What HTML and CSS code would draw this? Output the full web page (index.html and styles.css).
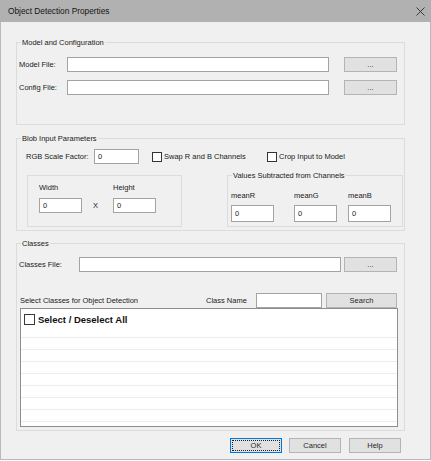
FILE: index.html
```html
<!DOCTYPE html>
<html>
<head>
<meta charset="utf-8">
<title>Object Detection Properties</title>
<link rel="stylesheet" href="styles.css">
</head>
<body>
<div class="window">
  <div class="titlebar">
    <span class="title">Object Detection Properties</span>
    <svg class="close" width="9" height="9" viewBox="0 0 9 9"><path d="M0.5 0.5 L8.5 8.5 M8.5 0.5 L0.5 8.5" stroke="#2b2b2b" stroke-width="0.9" fill="none"/></svg>
  </div>
  <div class="client">
    <div class="group g1">
      <div class="legend">Model and Configuration</div>
      <div class="row g1r1">
        <span class="lbl lbl-model">Model File:</span>
        <span class="input w-file"></span>
        <span class="btn browse">...</span>
      </div>
      <div class="row g1r2">
        <span class="lbl lbl-model">Config File:</span>
        <span class="input w-file"></span>
        <span class="btn browse">...</span>
      </div>
    </div>

    <div class="group g2">
      <div class="legend">Blob Input Parameters</div>
      <div class="row g2r1">
        <span class="lbl lbl-rgb">RGB Scale Factor:</span>
        <span class="input w-rgb"><span class="val">0</span></span>
        <span class="check check-swap"><span class="box"></span><span class="ctext">Swap R and B Channels</span></span>
        <span class="check"><span class="box"></span><span class="ctext">Crop Input to Model</span></span>
      </div>
      <div class="subrow">
        <div class="frame frame-size">
          <div class="col">
            <span class="clbl">Width</span>
            <span class="input w-small"><span class="val">0</span></span>
          </div>
          <span class="times">X</span>
          <div class="col">
            <span class="clbl">Height</span>
            <span class="input w-small"><span class="val">0</span></span>
          </div>
        </div>
        <div class="frame frame-mean">
          <div class="legend legend-sub">Values Subtracted from Channels</div>
          <div class="means">
            <div class="col">
              <span class="clbl">meanR</span>
              <span class="input w-small tall"><span class="val">0</span></span>
            </div>
            <div class="col col-g">
              <span class="clbl">meanG</span>
              <span class="input w-small tall"><span class="val">0</span></span>
            </div>
            <div class="col col-b">
              <span class="clbl">meanB</span>
              <span class="input w-small tall"><span class="val">0</span></span>
            </div>
          </div>
        </div>
      </div>
    </div>

    <div class="group g3">
      <div class="legend">Classes</div>
      <div class="row g3r1">
        <span class="lbl lbl-classes">Classes File:</span>
        <span class="input w-file"></span>
        <span class="btn browse browse-classes">...</span>
      </div>
      <div class="row g3r2">
        <span class="lbl lbl-select">Select Classes for Object Detection</span>
        <span class="lbl lbl-cname">Class Name</span>
        <span class="input w-cname"></span>
        <span class="btn search">Search</span>
      </div>
      <div class="list">
        <div class="item first"><span class="box"></span><span class="itext">Select / Deselect All</span></div>
        <div class="item"></div>
        <div class="item"></div>
        <div class="item"></div>
        <div class="item"></div>
        <div class="item"></div>
        <div class="item"></div>
        <div class="item"></div>
        <div class="item"></div>
      </div>
    </div>

    <div class="buttons">
      <span class="btn dlg ok">OK</span>
      <span class="btn dlg cancel">Cancel</span>
      <span class="btn dlg help">Help</span>
    </div>
  </div>
</div>
</body>
</html>
```

FILE: styles.css
```css
html, body {
  margin: 0;
  padding: 0;
  background: #ffffff;
}
body {
  font-family: "Liberation Sans", Arial, sans-serif;
  font-size: 7.5px;
  color: #1a1a1a;
}
.window {
  width: 431px;
  height: 460px;
  display: flex;
  flex-direction: column;
  background: #f0f0f0;
}
.titlebar {
  height: 22px;
  flex: none;
  background: #b1b1b1;
  display: flex;
  align-items: center;
  justify-content: space-between;
  padding: 0 6px 0 8px;
}
.title {
  font-size: 8.3px;
  color: #141414;
}
.close {
  display: block;
  margin-top: 1px;
}
.client {
  flex: 1;
  border: 1px solid #b9b9b9;
  border-top: 0;
  padding-left: 15px;
}
.group {
  box-sizing: border-box;
  width: 389px;
  border: 1px solid #dcdcdc;
}
.legend {
  display: block;
  width: max-content;
  height: 10px;
  line-height: 10px;
  margin-top: -5px;
  margin-left: 4px;
  padding: 0 1px;
  background: #f0f0f0;
}
.row {
  display: flex;
  align-items: center;
  height: 15px;
}
.lbl {
  flex: none;
  line-height: 10px;
  white-space: nowrap;
}
.input {
  box-sizing: border-box;
  flex: none;
  height: 15px;
  background: #ffffff;
  border: 1px solid #a3a3a3;
  display: flex;
  align-items: center;
}
.val {
  padding-left: 3px;
  line-height: 10px;
}
.btn {
  box-sizing: border-box;
  flex: none;
  height: 15px;
  background: #e1e1e1;
  border: 1px solid #b4b4b4;
  display: flex;
  align-items: center;
  justify-content: center;
  line-height: 10px;
  color: #262626;
}

/* group 1 */
.g1 {
  margin-top: 20px;
  height: 83px;
}
.g1r1 {
  margin-top: 9px;
  padding-left: 2px;
}
.g1r2 {
  margin-top: 8px;
  padding-left: 2px;
}
.lbl-model {
  width: 48px;
}
.w-file {
  width: 262px;
}
.browse {
  width: 53px;
  margin-left: 15px;
}
.browse-classes {
  margin-left: 3px;
}

/* group 2 */
.g2 {
  margin-top: 13px;
  height: 93px;
}
.g2r1 {
  margin-top: 5px;
  padding-left: 9px;
}
.lbl-rgb {
  width: 68px;
}
.w-rgb {
  width: 45px;
}
.check {
  display: flex;
  align-items: center;
  flex: none;
}
.check-swap {
  margin-left: 13px;
  width: 115px;
}
.box {
  box-sizing: border-box;
  flex: none;
  width: 10px;
  height: 10px;
  border: 1px solid #333333;
  background: #ffffff;
}
.ctext {
  margin-left: 2px;
  line-height: 10px;
  white-space: nowrap;
}
.subrow {
  display: flex;
  margin-top: 11px;
}
.frame {
  box-sizing: border-box;
  height: 52px;
  border: 1px solid #dcdcdc;
}
.frame-size {
  width: 155px;
  margin-left: 10px;
  display: flex;
  padding-left: 11px;
}
.col {
  display: flex;
  flex-direction: column;
  flex: none;
}
.clbl {
  height: 10px;
  line-height: 10px;
  white-space: nowrap;
}
.frame-size .clbl {
  margin-top: 7px;
  margin-bottom: 5px;
}
.w-small {
  width: 43px;
}
.times {
  width: 31px;
  box-sizing: border-box;
  padding-left: 11px;
  margin-top: 22px;
  height: 15px;
  line-height: 15px;
  color: #1a1a1a;
}
.frame-mean {
  width: 176px;
  margin-left: 45px;
}
.legend-sub {
  margin-left: 4px;
}
.means {
  display: flex;
  padding-left: 3px;
  margin-top: 10px;
}
.means .clbl {
  margin-bottom: 4px;
}
.tall {
  height: 17px;
}
.col-g {
  margin-left: 20px;
}
.col-b {
  margin-left: 11px;
}

/* group 3 */
.g3 {
  margin-top: 12px;
  height: 188px;
}
.g3r1 {
  margin-top: 8px;
  padding-left: 2px;
}
.lbl-classes {
  width: 60px;
}
.g3r2 {
  margin-top: 21px;
  padding-left: 3px;
}
.lbl-select {
  width: 186px;
}
.lbl-cname {
  width: 50px;
}
.w-cname {
  width: 66px;
}
.search {
  width: 71px;
  margin-left: 4px;
}
.list {
  box-sizing: border-box;
  width: 378px;
  height: 119px;
  margin-left: 3px;
  background: #ffffff;
  border: 1px solid #8e8e8e;
  overflow: hidden;
}
.item {
  height: 11px;
  border-bottom: 1px solid #ececec;
}
.item.first {
  box-sizing: border-box;
  display: flex;
  align-items: flex-start;
  padding-top: 5px;
  padding-left: 3px;
  height: 29px;
}
.item.first .box {
  width: 11px;
  height: 11px;
  border-color: #3a3a3a;
}
.itext {
  margin-left: 3px;
  font-weight: bold;
  font-size: 9.5px;
  line-height: 11px;
  color: #111111;
}

/* dialog buttons */
.buttons {
  width: 389px;
  box-sizing: border-box;
  display: flex;
  justify-content: flex-end;
  padding-right: 4px;
  margin-top: 7px;
}
.dlg {
  width: 52px;
}
.ok {
  border-color: #0078d7;
  outline: 1px dotted #222222;
  outline-offset: -3px;
}
.cancel {
  margin-left: 7px;
}
.help {
  margin-left: 8px;
}
```
